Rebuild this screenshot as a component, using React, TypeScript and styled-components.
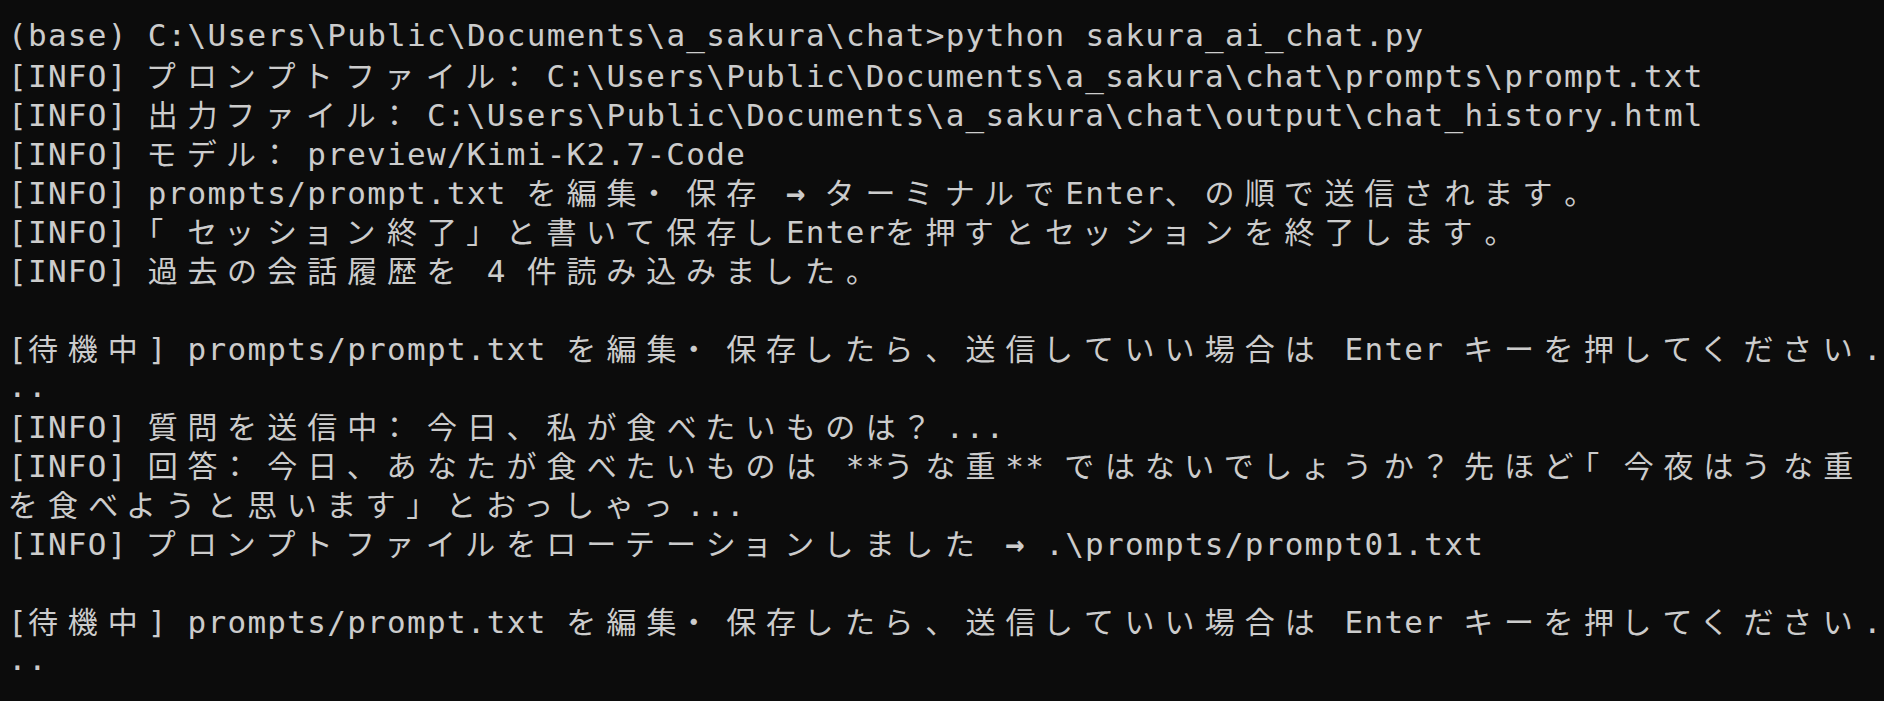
import React from "react";
import styled, { createGlobalStyle } from "styled-components";

const CELL = 19.95;
const MONO_SIZE = 31;
const MONO_ADVANCE = MONO_SIZE * 0.602;

const GlobalStyle = createGlobalStyle`
  html, body {
    margin: 0;
    padding: 0;
    background: #0c0c0c;
  }
  body {
    width: 1884px;
    height: 701px;
    overflow: hidden;
  }
`;

const Terminal = styled.div`
  box-sizing: border-box;
  width: 1884px;
  height: 701px;
  padding: 16px 0 0 8px;
  background: #0c0c0c;
  color: #cccccc;
  display: flex;
  flex-direction: column;
  overflow: hidden;
`;

const Line = styled.div`
  height: 39px;
  line-height: 39px;
  white-space: pre;
  font-family: "DejaVu Sans Mono", "Liberation Mono", monospace;
  font-size: ${MONO_SIZE}px;
  flex: none;
`;

const Narrow = styled.span`
  font-family: "DejaVu Sans Mono", "Liberation Mono", monospace;
  font-size: ${MONO_SIZE}px;
  letter-spacing: ${CELL - MONO_ADVANCE}px;
`;

const Arrow = styled.span`
  display: inline-block;
  width: ${CELL}px;
  overflow: visible;
  text-align: left;
  font-family: "DejaVu Sans Mono", monospace;
  font-size: 32px;
  font-weight: bold;
`;

const Wide = styled.span`
  display: inline-block;
  width: ${CELL * 2}px;
  text-align: left;
  font-family: "Noto Sans CJK JP", "Noto Sans CJK SC", sans-serif;
  font-size: 30px;
  font-feature-settings: "palt";
  line-height: 39px;
  vertical-align: baseline;
`;

const WIDE_RE =
  /[\u1100-\u115F\u2E80-\u303E\u3041-\u33FF\u3400-\u4DBF\u4E00-\u9FFF\uA000-\uA4CF\uAC00-\uD7A3\uF900-\uFAFF\uFE30-\uFE4F\uFF00-\uFF60\uFFE0-\uFFE6]/;

type Kind = "narrow" | "wide" | "arrow";
type Seg = { kind: Kind; text: string };

function split(line: string): Seg[] {
  const segs: Seg[] = [];
  for (const ch of Array.from(line)) {
    const kind: Kind = ch === "→" ? "arrow" : WIDE_RE.test(ch) ? "wide" : "narrow";
    const last = segs[segs.length - 1];
    if (kind === "narrow" && last && last.kind === "narrow") {
      last.text += ch;
    } else {
      segs.push({ kind, text: ch });
    }
  }
  return segs;
}

const WAIT =
  "[待機中] prompts/prompt.txt を編集・保存したら、送信していい場合は Enter キーを押してください.";

const LINES: string[] = [
  "(base) C:\\Users\\Public\\Documents\\a_sakura\\chat>python sakura_ai_chat.py",
  "[INFO] プロンプトファイル：C:\\Users\\Public\\Documents\\a_sakura\\chat\\prompts\\prompt.txt",
  "[INFO] 出力ファイル：C:\\Users\\Public\\Documents\\a_sakura\\chat\\output\\chat_history.html",
  "[INFO] モデル：preview/Kimi-K2.7-Code",
  "[INFO] prompts/prompt.txt を編集・保存 → ターミナルでEnter、の順で送信されます。",
  "[INFO] 「セッション終了」と書いて保存しEnterを押すとセッションを終了します。",
  "[INFO] 過去の会話履歴を 4 件読み込みました。",
  "",
  WAIT,
  "..",
  "[INFO] 質問を送信中：今日、私が食べたいものは？...",
  "[INFO] 回答：今日、あなたが食べたいものは **うな重** ではないでしょうか？先ほど「今夜はうな重",
  "を食べようと思います」とおっしゃっ...",
  "[INFO] プロンプトファイルをローテーションしました → .\\prompts/prompt01.txt",
  "",
  WAIT,
  "..",
];

function TermLine({ text }: { text: string }) {
  const segs = split(text);
  return (
    <Line>
      {segs.length === 0
        ? " "
        : segs.map((s, i) =>
            s.kind === "wide" ? (
              <Wide key={i}>{s.text}</Wide>
            ) : s.kind === "arrow" ? (
              <Arrow key={i}>{s.text}</Arrow>
            ) : (
              <Narrow key={i}>{s.text}</Narrow>
            )
          )}
    </Line>
  );
}

export default function App() {
  return (
    <>
      <GlobalStyle />
      <Terminal>
        {LINES.map((l, i) => (
          <TermLine key={i} text={l} />
        ))}
      </Terminal>
    </>
  );
}
